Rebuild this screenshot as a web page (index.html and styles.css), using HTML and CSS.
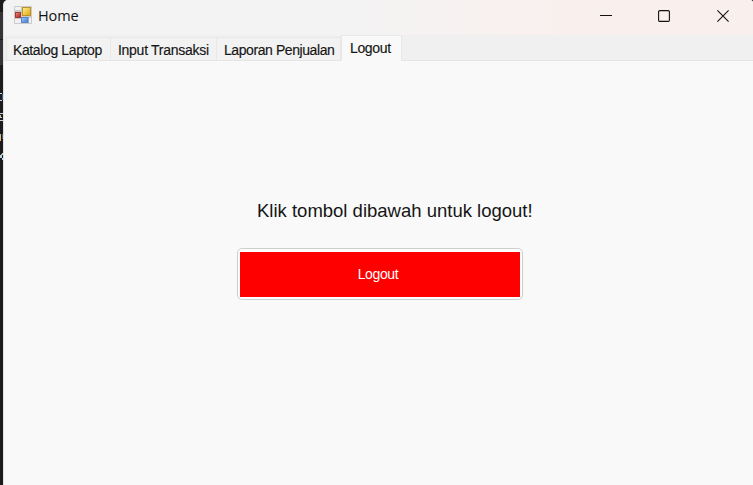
FILE: index.html
```html
<!DOCTYPE html>
<html lang="id">
<head>
<meta charset="utf-8">
<title>Home</title>
<link rel="stylesheet" href="styles.css">
</head>
<body>
<div class="desktop">
  <aside class="editor" aria-hidden="true">
    <svg width="5" height="485" viewBox="0 0 5 485" shape-rendering="crispEdges">
      <path fill="#343436" d="M0 12h3v27H0zM0 40h3v25H0z"/>
      <path fill="#c8d0d2" d="M0 93h2v1H0zM0 100h2v1H0zM0 113h3v1H0zM0 120h3v1H0z"/>
      <path fill="#335f94" d="M2 94h1v6H2zM2 134h1v5H2z"/>
      <path fill="#e6b96d" d="M0 134h1v7H0zM0 115h1v2H0zM1 154h1v1H1z"/>
      <path fill="#b4d6e5" d="M0 155h2v3H0zM2 153h1v2H2zM2 158h1v2H2zM0 117h2v1H0z"/>
    </svg>
  </aside>
  <main class="window">
    <header class="titlebar">
      <svg class="app-icon" width="18" height="18" viewBox="0 0 18 18">
        <defs>
          <linearGradient id="gold" x2="1" y2="1"><stop stop-color="#fff09a"/><stop offset="1" stop-color="#e3a300"/></linearGradient>
          <linearGradient id="blue" x2="1" y2="1"><stop stop-color="#a4cbff"/><stop offset="1" stop-color="#3a78d8"/></linearGradient>
          <linearGradient id="red" x2="1" y2="1"><stop stop-color="#ee9880"/><stop offset="1" stop-color="#a91510"/></linearGradient>
        </defs>
        <rect width="18" height="18" rx=".8" fill="#cbcbcb"/>
        <path fill="#f1f1f1" d="M1 1h6v3H1zM1 13h6v4H1zM15 12h2v5h-2z"/>
        <rect x="1.5" y="6.5" width="5" height="5" fill="url(#red)" stroke="#a83832"/>
        <rect x="8.5" y="1.5" width="8" height="8" fill="url(#gold)" stroke="#bd942c"/>
        <rect x="7.5" y="11.5" width="6.5" height="5" fill="url(#blue)" stroke="#5a86c4"/>
      </svg>
      <span class="title">Home</span>
      <div class="controls">
        <svg width="12" height="12" viewBox="0 0 12 12"><path d="M0 5.5h12"/></svg>
        <svg width="12" height="12" viewBox="0 0 12 12"><rect x=".6" y=".6" width="10.8" height="10.8" rx="1.2"/></svg>
        <svg width="12" height="12" viewBox="0 0 12 12"><path d="M.4.4l11.2 11.2M11.6.4L.4 11.6"/></svg>
      </div>
    </header>
    <nav class="tabs">
      <span class="tab catalog"><span class="label">Katalog Laptop</span></span>
      <span class="tab input"><span class="label">Input Transaksi</span></span>
      <span class="tab report"><span class="label">Laporan Penjualan</span></span>
      <span class="tab active"><span class="label">Logout</span></span>
    </nav>
    <section class="page">
      <p class="message">Klik tombol dibawah untuk logout!</p>
      <button class="logout"><span>Logout</span></button>
    </section>
  </main>
</div>
</body>
</html>
```
FILE: styles.css
```css
* { box-sizing: border-box; }
body { margin: 0; overflow: hidden; font-family: "Liberation Sans", Arial, sans-serif; color: #151515; }
.desktop { display: flex; width: 753px; height: 485px; background: #1c1c1e; }
.editor { flex: 0 0 3px; overflow: hidden; }
.editor svg { display: block; }
.window { flex: 1; display: flex; flex-direction: column; background: #f9f9f9; border-left: 1px solid #e2e2e2; border-radius: 5px 3px 0 0; overflow: hidden; }
.titlebar { flex: 0 0 35px; display: flex; align-items: flex-start; padding: 6px 24px 0 10px; background: linear-gradient(90deg, #f3f3f3 45%, #f9f0ee 75%); }
.app-icon { flex: none; }
.title { margin-left: 6px; font: 14.5px/19px "Open Sans", "Noto Sans", sans-serif; letter-spacing: -.1px; color: #111; }
.controls { margin: 4px 0 0 auto; display: flex; gap: 47px; }
.controls svg { display: block; fill: none; stroke: #111; stroke-width: 1.1; }
.controls svg:first-child { margin-right: -1px; }
.tabs { flex: 0 0 26px; display: flex; align-items: flex-end; padding: 0 0 0 2px; background: linear-gradient(#f0f0f0 25px, #e5e5e5 25px); }
.tab { height: 23px; margin-bottom: 1px; padding: 4px 0 0 7px; border: 1px solid #e8e8e8; border-width: 1px 1px 0 0; background: #f2f2f2; font-size: 14px; line-height: 16px; white-space: nowrap; }
.label { display: block; -webkit-text-stroke: .15px #151515; }
.catalog { width: 105px; border-left-width: 1px; padding-left: 6px; letter-spacing: -.38px; }
.input { width: 106px; letter-spacing: -.28px; }
.report { width: 124px; letter-spacing: -.42px; }
.active { width: 61px; height: 26px; margin-bottom: 0; padding: 4px 0 0 8px; border-left-width: 1px; background: #f9f9f9; letter-spacing: -.35px; }
.page { flex: 1; padding: 138px 0 0 233px; }
.message { margin: 0 0 0 20px; font-size: 18.5px; line-height: 24px; letter-spacing: 0; white-space: nowrap; }
.logout { display: flex; align-items: center; justify-content: center; width: 286px; height: 52px; margin: 25px 0 0; padding: 0 4px 0 0; border: 1px solid #cecece; border-radius: 5px; color: #fff; font: 14px/16px "Liberation Sans", Arial, sans-serif; letter-spacing: -.35px; background: linear-gradient(red, red) 2px 2.5px / 280px 45px no-repeat, #fdfdfd; }
```
